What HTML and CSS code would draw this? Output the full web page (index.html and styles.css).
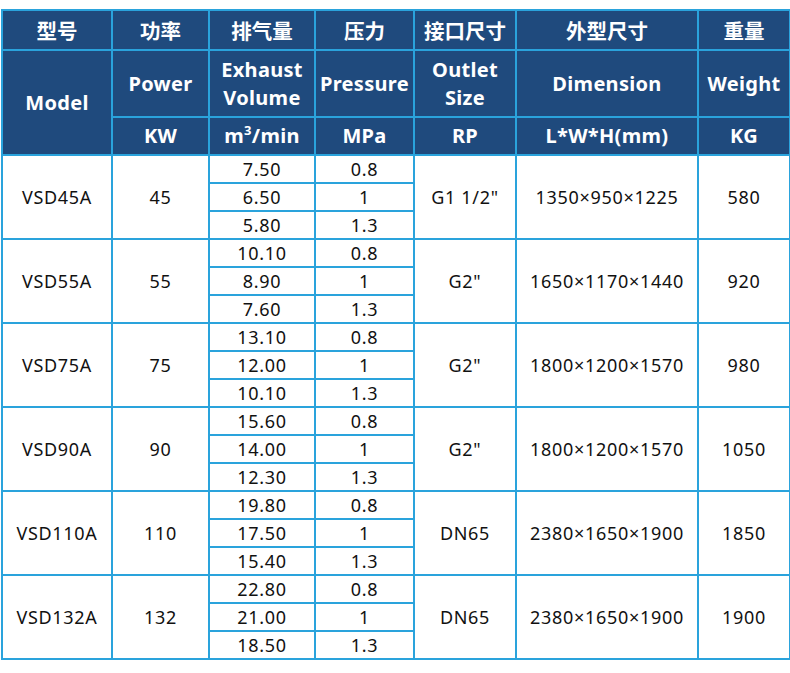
FILE: index.html
```html
<!DOCTYPE html>
<html>
<head>
<meta charset="utf-8">
<link rel="stylesheet" href="styles.css">
</head>
<body>
<table class="spec">
<colgroup>
<col class="c1"><col class="c2"><col class="c3"><col class="c4"><col class="c5"><col class="c6"><col class="c7">
</colgroup>
<thead>
<tr class="h1">
<th>型号</th><th>功率</th><th>排气量</th><th>压力</th><th>接口尺寸</th><th>外型尺寸</th><th>重量</th>
</tr>
<tr class="h2">
<th rowspan="2" class="model">Model</th><th>Power</th><th>Exhaust<br>Volume</th><th>Pressure</th><th>Outlet<br>Size</th><th>Dimension</th><th>Weight</th>
</tr>
<tr class="h3">
<th>KW</th><th>m<sup>3</sup>/min</th><th>MPa</th><th>RP</th><th>L*W*H(mm)</th><th>KG</th>
</tr>
</thead>
<tbody>
<tr><td rowspan="3">VSD45A</td><td rowspan="3">45</td><td>7.50</td><td>0.8</td><td rowspan="3">G1 1/2"</td><td rowspan="3">1350×950×1225</td><td rowspan="3">580</td></tr>
<tr><td>6.50</td><td>1</td></tr>
<tr><td>5.80</td><td>1.3</td></tr>
<tr><td rowspan="3">VSD55A</td><td rowspan="3">55</td><td>10.10</td><td>0.8</td><td rowspan="3">G2"</td><td rowspan="3">1650×1170×1440</td><td rowspan="3">920</td></tr>
<tr><td>8.90</td><td>1</td></tr>
<tr><td>7.60</td><td>1.3</td></tr>
<tr><td rowspan="3">VSD75A</td><td rowspan="3">75</td><td>13.10</td><td>0.8</td><td rowspan="3">G2"</td><td rowspan="3">1800×1200×1570</td><td rowspan="3">980</td></tr>
<tr><td>12.00</td><td>1</td></tr>
<tr><td>10.10</td><td>1.3</td></tr>
<tr><td rowspan="3">VSD90A</td><td rowspan="3">90</td><td>15.60</td><td>0.8</td><td rowspan="3">G2"</td><td rowspan="3">1800×1200×1570</td><td rowspan="3">1050</td></tr>
<tr><td>14.00</td><td>1</td></tr>
<tr><td>12.30</td><td>1.3</td></tr>
<tr><td rowspan="3">VSD110A</td><td rowspan="3">110</td><td>19.80</td><td>0.8</td><td rowspan="3">DN65</td><td rowspan="3">2380×1650×1900</td><td rowspan="3">1850</td></tr>
<tr><td>17.50</td><td>1</td></tr>
<tr><td>15.40</td><td>1.3</td></tr>
<tr><td rowspan="3">VSD132A</td><td rowspan="3">132</td><td>22.80</td><td>0.8</td><td rowspan="3">DN65</td><td rowspan="3">2380×1650×1900</td><td rowspan="3">1900</td></tr>
<tr><td>21.00</td><td>1</td></tr>
<tr><td>18.50</td><td>1.3</td></tr>
</tbody>
</table>
</body>
</html>
```
FILE: styles.css
```css
html, body {
  margin: 0;
  padding: 0;
  background: #ffffff;
}
body {
  padding-top: 9px;
  padding-left: 1px;
  font-family: "Noto Sans", "Noto Sans CJK SC", sans-serif;
}
.spec {
  border-collapse: collapse;
  table-layout: fixed;
  width: 788px;
}
.c1 { width: 110px; }
.c2 { width: 97px; }
.c3 { width: 106px; }
.c4 { width: 99px; }
.c5 { width: 102px; }
.c6 { width: 182px; }
.c7 { width: 92px; }
.spec th, .spec td {
  border: 2px solid #2aa3dc;
  padding: 0;
  text-align: center;
  vertical-align: middle;
}
.spec th {
  background: #1f4a7d;
  color: #ffffff;
  font-weight: 700;
  font-size: 20px;
  letter-spacing: 0.3px;
  line-height: 28px;
  white-space: nowrap;
}
.h1 th {
  height: 38px;
  font-family: "Noto Sans CJK SC", sans-serif;
  font-size: 20.5px;
  letter-spacing: 0;
}
.h2 th { height: 65px; }
.h3 th { height: 36px; }
.spec th.model { padding-top: 38px; vertical-align: top; }
.spec sup {
  font-size: 13px;
  line-height: 0;
  vertical-align: 8px;
}
.spec td {
  height: 26px;
  font-size: 18px;
  line-height: 26px;
  color: #111111;
  letter-spacing: 0.7px;
}
```
